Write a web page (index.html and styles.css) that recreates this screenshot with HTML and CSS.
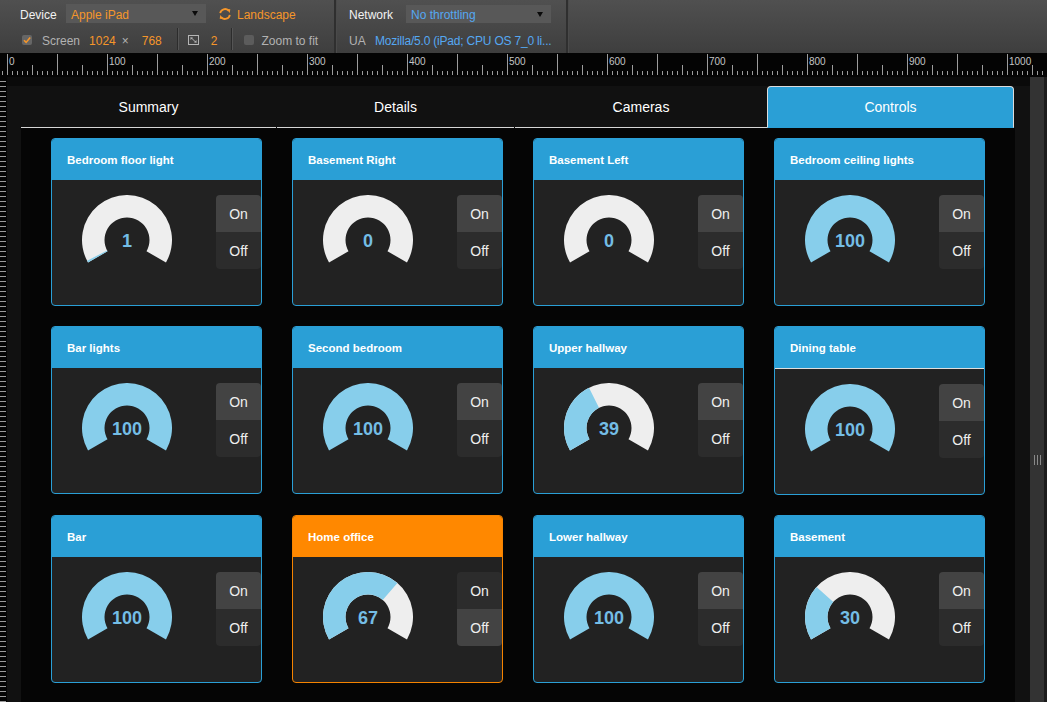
FILE: index.html
```html
<!DOCTYPE html>
<html lang="en">
<head>
<meta charset="utf-8">
<title>Controls</title>
<link rel="stylesheet" href="styles.css">
</head>
<body>
<div class="app">
  <header class="toolbar">
    <div class="tb-group tb-device">
      <div class="tb-row">
        <span class="tb-label lbl-device">Device</span>
        <div class="select sel-device"><span class="orange">Apple iPad</span><i class="caret"></i></div>
        <span class="landscape">
          <svg class="ico-rotate" width="14" height="14" viewBox="0 0 14 14">
            <path d="M2.2 6.2 A4.9 4.9 0 0 1 10.6 3.6" fill="none" stroke="#f5962a" stroke-width="1.8"/>
            <path d="M8.4 1.9 L12.3 2.2 L11.7 6 Z" fill="#f5962a"/>
            <path d="M11.8 7.8 A4.9 4.9 0 0 1 3.4 10.4" fill="none" stroke="#f5962a" stroke-width="1.8"/>
            <path d="M5.6 12.1 L1.7 11.8 L2.3 8 Z" fill="#f5962a"/>
          </svg>
          <span class="orange">Landscape</span>
        </span>
      </div>
      <div class="tb-row tb-row2">
        <span class="check checked">
          <svg width="10" height="10" viewBox="0 0 10 10"><path d="M2 5.2 L4.1 7.4 L8.2 2.4" fill="none" stroke="#f5962a" stroke-width="1.6"/></svg>
        </span>
        <span class="muted lbl-screen">Screen</span>
        <span class="orange v-w">1024</span>
        <span class="muted v-x">×</span>
        <span class="orange v-h">768</span>
        <span class="vsep sep-a"></span>
        <svg class="ico-resize" width="11" height="10" viewBox="0 0 11 10">
          <rect x="0.5" y="0.5" width="10" height="9" fill="none" stroke="#b5b5b5" stroke-width="1"/>
          <path d="M3 2.5 L8 7.5" stroke="#b5b5b5" stroke-width="1"/>
          <path d="M2.5 2.5 L5 2.5 L2.5 5 Z M8.5 7.5 L6 7.5 L8.5 5 Z" fill="#b5b5b5"/>
        </svg>
        <span class="orange v-dpr">2</span>
        <span class="vsep sep-b"></span>
        <span class="check chk-zoom"></span>
        <span class="muted lbl-zoom">Zoom to fit</span>
      </div>
    </div>
    <div class="tb-divider"></div>
    <div class="tb-group tb-network">
      <div class="tb-row">
        <span class="tb-label lbl-network">Network</span>
        <div class="select sel-net"><span class="blue">No throttling</span><i class="caret"></i></div>
      </div>
      <div class="tb-row tb-row2">
        <span class="muted lbl-ua">UA</span>
        <span class="blue ua-text">Mozilla/5.0 (iPad; CPU OS 7_0 li...</span>
      </div>
    </div>
    <div class="tb-divider"></div>
  </header>

  <div class="ruler-h">
    <span class="rl">0</span><span class="rl">100</span><span class="rl">200</span><span class="rl">300</span><span class="rl">400</span><span class="rl">500</span><span class="rl">600</span><span class="rl">700</span><span class="rl">800</span><span class="rl">900</span><span class="rl rl-last">1000</span>
  </div>

  <div class="main">
    <div class="ruler-v"></div>
    <div class="viewport">
      <div class="page">
        <nav class="tabs">
          <div class="tab t-summary">Summary</div>
          <div class="tab t-details">Details</div>
          <div class="tab t-cameras">Cameras</div>
          <div class="tab t-controls active">Controls</div>
        </nav>
        <section class="content">
          <div class="grid">

            <div class="card">
              <div class="card-head">Bedroom floor light</div>
              <div class="card-body">
                <svg class="gauge" width="90" height="68" viewBox="-45 -45 90 68">
                  <path class="g-bg" d="M-38.97 22.5 A45 45 0 1 1 38.97 22.5 L19.49 11.25 A22.5 22.5 0 1 0 -19.49 11.25 Z"/>
                  <path class="g-fg" d="M-38.97 22.5 A45 45 0 0 1 -39.88 20.85 L-19.94 10.42 A22.5 22.5 0 0 0 -19.49 11.25 Z"/>
                  <text class="g-val" x="0" y="6.5">1</text>
                </svg>
                <div class="btns"><div class="btn on-top active">On</div><div class="btn off-bot">Off</div></div>
              </div>
            </div>

            <div class="card">
              <div class="card-head">Basement Right</div>
              <div class="card-body">
                <svg class="gauge" width="90" height="68" viewBox="-45 -45 90 68">
                  <path class="g-bg" d="M-38.97 22.5 A45 45 0 1 1 38.97 22.5 L19.49 11.25 A22.5 22.5 0 1 0 -19.49 11.25 Z"/>
                  <text class="g-val" x="0" y="6.5">0</text>
                </svg>
                <div class="btns"><div class="btn on-top active">On</div><div class="btn off-bot">Off</div></div>
              </div>
            </div>

            <div class="card">
              <div class="card-head">Basement Left</div>
              <div class="card-body">
                <svg class="gauge" width="90" height="68" viewBox="-45 -45 90 68">
                  <path class="g-bg" d="M-38.97 22.5 A45 45 0 1 1 38.97 22.5 L19.49 11.25 A22.5 22.5 0 1 0 -19.49 11.25 Z"/>
                  <text class="g-val" x="0" y="6.5">0</text>
                </svg>
                <div class="btns"><div class="btn on-top active">On</div><div class="btn off-bot">Off</div></div>
              </div>
            </div>

            <div class="card">
              <div class="card-head">Bedroom ceiling lights</div>
              <div class="card-body">
                <svg class="gauge" width="90" height="68" viewBox="-45 -45 90 68">
                  <path class="g-fg" d="M-38.97 22.5 A45 45 0 1 1 38.97 22.5 L19.49 11.25 A22.5 22.5 0 1 0 -19.49 11.25 Z"/>
                  <text class="g-val" x="0" y="6.5">100</text>
                </svg>
                <div class="btns"><div class="btn on-top active">On</div><div class="btn off-bot">Off</div></div>
              </div>
            </div>

            <div class="card">
              <div class="card-head">Bar lights</div>
              <div class="card-body">
                <svg class="gauge" width="90" height="68" viewBox="-45 -45 90 68">
                  <path class="g-fg" d="M-38.97 22.5 A45 45 0 1 1 38.97 22.5 L19.49 11.25 A22.5 22.5 0 1 0 -19.49 11.25 Z"/>
                  <text class="g-val" x="0" y="6.5">100</text>
                </svg>
                <div class="btns"><div class="btn on-top active">On</div><div class="btn off-bot">Off</div></div>
              </div>
            </div>

            <div class="card">
              <div class="card-head">Second bedroom</div>
              <div class="card-body">
                <svg class="gauge" width="90" height="68" viewBox="-45 -45 90 68">
                  <path class="g-fg" d="M-38.97 22.5 A45 45 0 1 1 38.97 22.5 L19.49 11.25 A22.5 22.5 0 1 0 -19.49 11.25 Z"/>
                  <text class="g-val" x="0" y="6.5">100</text>
                </svg>
                <div class="btns"><div class="btn on-top active">On</div><div class="btn off-bot">Off</div></div>
              </div>
            </div>

            <div class="card">
              <div class="card-head">Upper hallway</div>
              <div class="card-body">
                <svg class="gauge" width="90" height="68" viewBox="-45 -45 90 68">
                  <path class="g-bg" d="M-38.97 22.5 A45 45 0 1 1 38.97 22.5 L19.49 11.25 A22.5 22.5 0 1 0 -19.49 11.25 Z"/>
                  <path class="g-fg" d="M-38.97 22.5 A45 45 0 0 1 -20.01 -40.31 L-10.00 -20.15 A22.5 22.5 0 0 0 -19.49 11.25 Z"/>
                  <text class="g-val" x="0" y="6.5">39</text>
                </svg>
                <div class="btns"><div class="btn on-top active">On</div><div class="btn off-bot">Off</div></div>
              </div>
            </div>

            <div class="card">
              <div class="card-head head-line">Dining table</div>
              <div class="card-body">
                <svg class="gauge" width="90" height="68" viewBox="-45 -45 90 68">
                  <path class="g-fg" d="M-38.97 22.5 A45 45 0 1 1 38.97 22.5 L19.49 11.25 A22.5 22.5 0 1 0 -19.49 11.25 Z"/>
                  <text class="g-val" x="0" y="6.5">100</text>
                </svg>
                <div class="btns"><div class="btn on-top active">On</div><div class="btn off-bot">Off</div></div>
              </div>
            </div>

            <div class="card">
              <div class="card-head">Bar</div>
              <div class="card-body">
                <svg class="gauge" width="90" height="68" viewBox="-45 -45 90 68">
                  <path class="g-fg" d="M-38.97 22.5 A45 45 0 1 1 38.97 22.5 L19.49 11.25 A22.5 22.5 0 1 0 -19.49 11.25 Z"/>
                  <text class="g-val" x="0" y="6.5">100</text>
                </svg>
                <div class="btns"><div class="btn on-top active">On</div><div class="btn off-bot">Off</div></div>
              </div>
            </div>

            <div class="card card-warn">
              <div class="card-head">Home office</div>
              <div class="card-body">
                <svg class="gauge" width="90" height="68" viewBox="-45 -45 90 68">
                  <path class="g-bg" d="M-38.97 22.5 A45 45 0 1 1 38.97 22.5 L19.49 11.25 A22.5 22.5 0 1 0 -19.49 11.25 Z"/>
                  <path class="g-fg" d="M-38.97 22.5 A45 45 0 0 1 29.40 -34.07 L14.70 -17.03 A22.5 22.5 0 0 0 -19.49 11.25 Z"/>
                  <text class="g-val" x="0" y="6.5">67</text>
                </svg>
                <div class="btns"><div class="btn on-top">On</div><div class="btn off-bot active">Off</div></div>
              </div>
            </div>

            <div class="card">
              <div class="card-head">Lower hallway</div>
              <div class="card-body">
                <svg class="gauge" width="90" height="68" viewBox="-45 -45 90 68">
                  <path class="g-fg" d="M-38.97 22.5 A45 45 0 1 1 38.97 22.5 L19.49 11.25 A22.5 22.5 0 1 0 -19.49 11.25 Z"/>
                  <text class="g-val" x="0" y="6.5">100</text>
                </svg>
                <div class="btns"><div class="btn on-top active">On</div><div class="btn off-bot">Off</div></div>
              </div>
            </div>

            <div class="card">
              <div class="card-head">Basement</div>
              <div class="card-body">
                <svg class="gauge" width="90" height="68" viewBox="-45 -45 90 68">
                  <path class="g-bg" d="M-38.97 22.5 A45 45 0 1 1 38.97 22.5 L19.49 11.25 A22.5 22.5 0 1 0 -19.49 11.25 Z"/>
                  <path class="g-fg" d="M-38.97 22.5 A45 45 0 0 1 -33.44 -30.11 L-16.72 -15.06 A22.5 22.5 0 0 0 -19.49 11.25 Z"/>
                  <text class="g-val" x="0" y="6.5">30</text>
                </svg>
                <div class="btns"><div class="btn on-top active">On</div><div class="btn off-bot">Off</div></div>
              </div>
            </div>

          </div>
        </section>
      </div>
    </div>
    <div class="vscroll"><div class="grip"><i></i><i></i><i></i></div></div>
    <div class="edge"></div>
  </div>
</div>
</body>
</html>
```

FILE: styles.css
```css
* { box-sizing: border-box; }

html, body {
  margin: 0;
  padding: 0;
  width: 1047px;
  height: 702px;
  overflow: hidden;
  background: #0a0a0a;
  font-family: "Liberation Sans", Arial, sans-serif;
}

.app {
  width: 1047px;
  height: 702px;
  display: flex;
  flex-direction: column;
  overflow: hidden;
}

/* ---------- toolbar ---------- */
.toolbar {
  height: 53px;
  flex: none;
  display: flex;
  background: linear-gradient(#505050, #3e3e3e);
  font-size: 12px;
}

.tb-group {
  display: flex;
  flex-direction: column;
}

.tb-device { width: 334px; padding-left: 20px; }
.tb-network { width: 230px; padding-left: 13px; }

.tb-divider {
  width: 2px;
  background: #2f2f2f;
  box-shadow: 1px 0 0 #4a4a4a;
}

.tb-row {
  display: flex;
  align-items: center;
  height: 19px;
  margin-top: 4px;
}

.tb-row .tb-label,
.tb-row .select > span,
.landscape > span {
  padding-top: 2px;
}

.tb-row2 {
  height: 22px;
  margin-top: 5px;
}

.tb-row2 > span.muted,
.tb-row2 > span.orange,
.tb-row2 > span.blue {
  padding-top: 4px;
}

.tb-label { color: #f2f2f2; }
.lbl-device { width: 46px; }
.lbl-network { width: 57px; }

.orange { color: #f5962a; }
.blue { color: #55a8f2; }
.muted { color: #b2b2b2; }

.select {
  display: flex;
  align-items: center;
  height: 19px;
  padding-left: 5px;
  background: #585858;
  position: relative;
}
.sel-device { width: 140px; }
.sel-net { width: 145px; height: 18px; }

.caret {
  position: absolute;
  right: 8px;
  top: 7px;
  width: 0;
  height: 0;
  border-left: 3.5px solid transparent;
  border-right: 3.5px solid transparent;
  border-top: 5px solid #0a0a0a;
}

.landscape {
  display: flex;
  align-items: center;
  margin-left: 12px;
}
.ico-rotate { margin-right: 5px; margin-top: 1px; }

.check {
  width: 10px;
  height: 10px;
  margin-left: 2px;
  margin-top: 2px;
  border-radius: 2px;
  background: #5c5c5c;
  display: flex;
}
.check.checked { background: #666; }

.lbl-screen { margin-left: 10px; }
.v-w { margin-left: 9px; }
.v-x { margin-left: 6px; }
.v-h { margin-left: 13px; }

.vsep {
  width: 1px;
  height: 22px;
  background: #2c2c2c;
  box-shadow: 1px 0 0 #555;
}
.sep-a { margin-left: 15px; }
.ico-resize { margin-left: 10px; margin-top: 2px; }
.v-dpr { margin-left: 12px; }
.sep-b { margin-left: 14px; }
.chk-zoom { margin-left: 12px; }
.lbl-zoom { margin-left: 7px; }

.lbl-ua { width: 26px; }
.ua-text { letter-spacing: -0.2px; }

/* ---------- rulers ---------- */
.ruler-h {
  height: 24px;
  flex: none;
  display: flex;
  padding-left: 7px;
  overflow: hidden;
  background:
    linear-gradient(to right, #9c9c9c 0 1px, transparent 1px) 7px 1px / 50px 21px repeat-x,
    linear-gradient(to right, #9c9c9c 0 1px, transparent 1px) 7px 12px / 25px 10px repeat-x,
    linear-gradient(to right, #9c9c9c 0 1px, transparent 1px) 7px 18px / 5px 4px repeat-x,
    #040404;
}

.rl {
  flex: none;
  width: 100px;
  padding: 3px 0 0 2px;
  font-size: 10px;
  line-height: 12px;
  color: #c4c4c4;
}
.rl-last { width: 40px; }

.main {
  flex: 1;
  display: flex;
  min-height: 0;
}

.ruler-v {
  width: 7px;
  flex: none;
  background:
    repeating-linear-gradient(to bottom, transparent 0 4px, #9a9a9a 4px 5px) 0 0 / 6px 100% no-repeat,
    #040404;
}

.viewport {
  width: 1023px;
  flex: none;
  background: #0a0a0a;
  padding-top: 9px;
  overflow: hidden;
}

.vscroll {
  width: 14px;
  flex: none;
  background: #333;
}
.grip {
  margin: 378px 0 0 4px;
  display: flex;
  gap: 2px;
}
.grip i {
  width: 1px;
  height: 10px;
  background: #8a8a8a;
}
.edge {
  flex: 1;
  background: #1c1c1c;
}

/* ---------- page ---------- */
.page {
  height: 100%;
  background: #111;
  padding: 0 15px 0 14px;
}

.tabs {
  display: flex;
  height: 42px;
}

.tab {
  flex: none;
  height: 42px;
  border-bottom: 1px solid #d6d6d6;
  color: #fff;
  font-size: 14px;
  display: flex;
  align-items: center;
  justify-content: center;
  padding-top: 1px;
}
.t-summary { width: 255px; margin-right: 1px; }
.t-details { width: 237px; margin-right: 1px; }
.t-cameras { width: 252px; }
.t-controls { width: 247px; }

.tab.active {
  background: #2a9fd6;
  border: 1px solid #dcdcdc;
  border-bottom-color: #2a9fd6;
  border-radius: 4px 4px 0 0;
  padding-top: 0;
}

.content {
  height: calc(100% - 42px);
  background: #050505;
  padding: 10px 30px 0;
  overflow: hidden;
}

.grid {
  display: grid;
  grid-template-columns: repeat(4, 211px);
  column-gap: 30px;
  row-gap: 20px;
  align-items: start;
}

/* ---------- cards ---------- */
.card {
  border: 1px solid #2a9fd6;
  border-radius: 4px;
  background: #222;
  overflow: hidden;
}

.card-head {
  height: 41px;
  background: #2a9fd6;
  color: #fff;
  font-weight: bold;
  font-size: 11.5px;
  padding-left: 15px;
  display: flex;
  align-items: center;
}
.card-head.head-line {
  height: 42px;
  border-bottom: 1px solid #dedede;
}

.card-warn { border-color: #f58300; }
.card-warn .card-head { background: #ff8800; }

.card-body {
  height: 125px;
  display: flex;
  align-items: flex-start;
  padding-top: 15px;
}

.gauge {
  flex: none;
  margin-left: 30px;
  display: block;
}
.g-bg { fill: #eeeeee; }
.g-fg { fill: #87ceeb; }
.g-val {
  fill: #74bde5;
  font-family: "Liberation Sans", Arial, sans-serif;
  font-weight: bold;
  font-size: 18px;
  text-anchor: middle;
}

.btns {
  margin-left: auto;
  width: 45px;
  display: flex;
  flex-direction: column;
}

.btn {
  height: 37px;
  display: flex;
  align-items: center;
  justify-content: center;
  font-size: 14px;
  color: #efefef;
  background: #2c2c2c;
}
.btn.active { background: #434343; }
.on-top { border-radius: 4px 4px 0 0; }
.off-bot { border-radius: 0 0 4px 4px; }
```
